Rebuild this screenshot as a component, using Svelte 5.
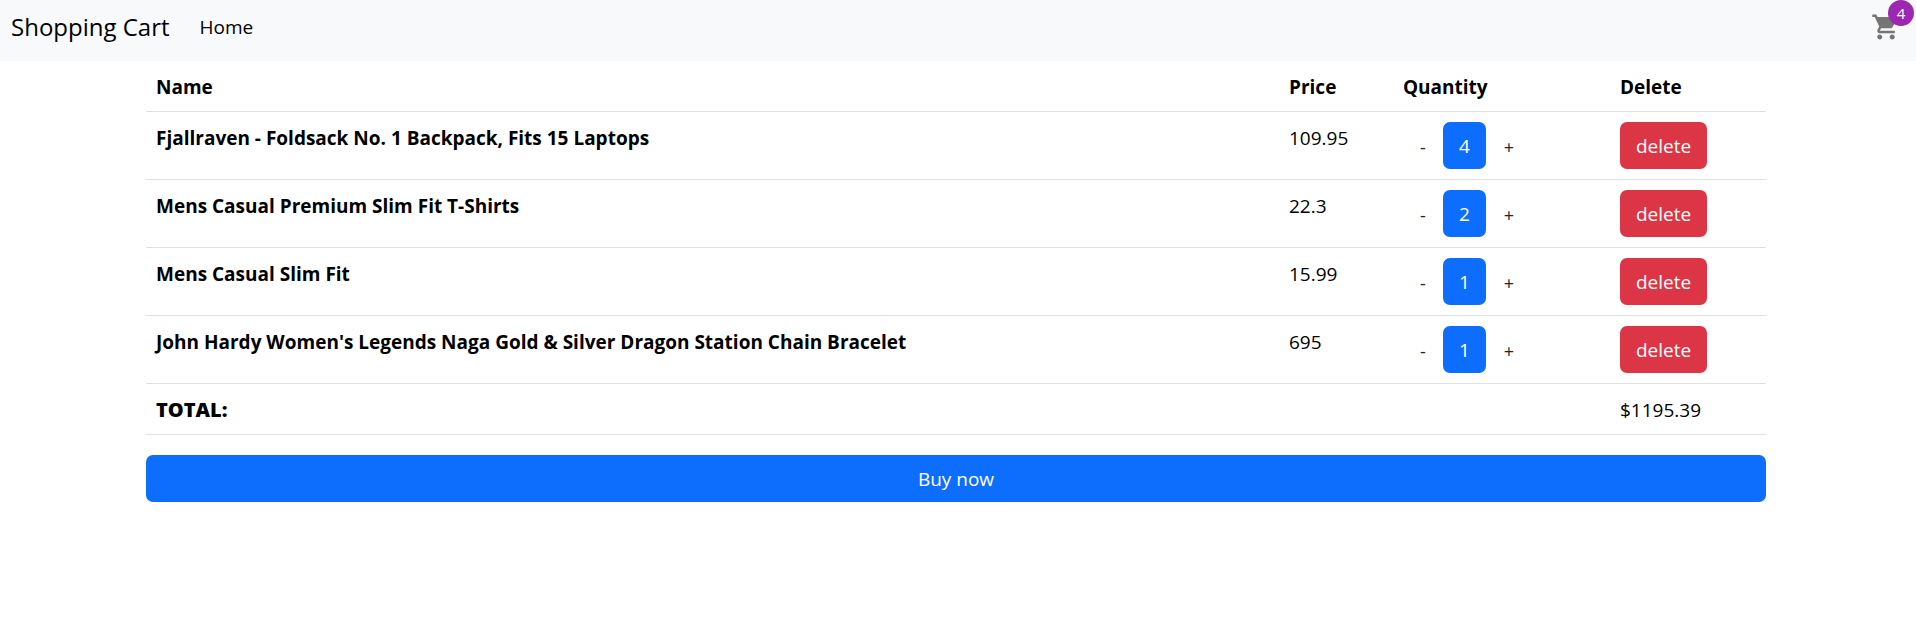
<script>
  let items = $state([
    { id: 1, name: 'Fjallraven - Foldsack No. 1 Backpack, Fits 15 Laptops', price: 109.95, quantity: 4 },
    { id: 2, name: 'Mens Casual Premium Slim Fit T-Shirts', price: 22.3, quantity: 2 },
    { id: 3, name: 'Mens Casual Slim Fit', price: 15.99, quantity: 1 },
    { id: 4, name: "John Hardy Women's Legends Naga Gold & Silver Dragon Station Chain Bracelet", price: 695, quantity: 1 }
  ]);

  let total = $derived(items.reduce((sum, item) => sum + item.price * item.quantity, 0).toFixed(2));

  function change(item, step) {
    item.quantity = Math.max(1, item.quantity + step);
  }

  function remove(id) {
    items = items.filter((item) => item.id !== id);
  }
</script>

<nav>
  <a class="brand" href="#top">Shopping Cart</a>
  <a class="link" href="#home">Home</a>
  <a class="cart" href="#cart">
    <svg viewBox="0 0 24 24" aria-hidden="true">
      <path d="M7 18c-1.1 0-1.99.9-1.99 2S5.9 22 7 22s2-.9 2-2-.9-2-2-2zM1 2v2h2l3.6 7.59-1.35 2.45c-.16.28-.25.61-.25.96 0 1.1.9 2 2 2h12v-2H7.42c-.14 0-.25-.11-.25-.25l.03-.12.9-1.63h7.45c.75 0 1.41-.41 1.75-1.03l3.58-6.49c.08-.14.12-.31.12-.48 0-.55-.45-1-1-1H5.21l-.94-2H1zm16 16c-1.1 0-1.99.9-1.99 2s.89 2 1.99 2 2-.9 2-2-.9-2-2-2z" />
    </svg>
    <span class="badge">{items.length}</span>
  </a>
</nav>

<main>
  <table>
    <thead>
      <tr>
        <th scope="col">Name</th>
        <th scope="col" class="price">Price</th>
        <th scope="col" class="quantity">Quantity</th>
        <th scope="col" class="delete">Delete</th>
      </tr>
    </thead>
    <tbody>
      {#each items as item (item.id)}
        <tr>
          <th scope="row">{item.name}</th>
          <td>{item.price}</td>
          <td class="control">
            <div class="stepper">
              <button class="step" onclick={() => change(item, -1)}>-</button>
              <button class="btn primary">{item.quantity}</button>
              <button class="step" onclick={() => change(item, 1)}>+</button>
            </div>
          </td>
          <td class="control"><button class="btn danger" onclick={() => remove(item.id)}>delete</button></td>
        </tr>
      {/each}
      <tr>
        <th scope="row" class="total" colspan="3">TOTAL:</th>
        <td>${total}</td>
      </tr>
    </tbody>
  </table>
  <button class="btn primary buy">Buy now</button>
</main>

<style>
  :global(body) {
    margin: 0;
    background: #fff;
    color: #000;
    font-family: 'Segoe UI', 'Open Sans', 'Noto Sans', sans-serif;
    font-size: 19px;
    line-height: 30px;
  }

  nav {
    display: flex;
    align-items: center;
    gap: 30px;
    padding: 8px 15px 15px 11px;
    background: #f8f9fa;
  }

  a {
    color: #000;
    text-decoration: none;
  }

  .brand {
    font-size: 24px;
    line-height: 38px;
  }

  .cart {
    position: relative;
    display: flex;
    margin-left: auto;
  }

  .cart svg {
    width: 30px;
    height: 30px;
    fill: #757575;
  }

  .badge {
    position: absolute;
    top: -12px;
    right: -13px;
    width: 26px;
    height: 26px;
    border-radius: 50%;
    background: #9c27b0;
    color: #fff;
    font-size: 15px;
    line-height: 26px;
    text-align: center;
  }

  main {
    padding: 0 150px 0 146px;
  }

  table {
    width: 100%;
    margin-bottom: 20px;
    border-collapse: separate;
    border-spacing: 0;
    table-layout: fixed;
  }

  th,
  td {
    box-sizing: border-box;
    padding: 11px 10px 9px;
    border-bottom: 1px solid #dee2e6;
    text-align: left;
    vertical-align: top;
  }

  .control {
    padding: 10px;
  }

  th {
    font-weight: 700;
  }

  .price {
    width: 114px;
  }

  .quantity {
    width: 217px;
  }

  .delete {
    width: 156px;
  }

  .total {
    font-size: 20px;
    font-weight: 800;
  }

  button {
    border: 0;
    background: none;
    font: inherit;
    cursor: pointer;
  }

  .stepper {
    display: flex;
  }

  .step {
    width: 40px;
    padding: 2px 0 0;
    color: #212529;
    font-size: 18px;
  }

  .stepper .step:last-child {
    width: 46px;
  }

  .btn {
    display: block;
    padding: 9px 16px 7px;
    border-radius: 7px;
    color: #fff;
    line-height: 31px;
  }

  .primary {
    background: #0d6efd;
  }

  .danger {
    background: #dc3545;
  }

  .buy {
    width: 100%;
  }
</style>
